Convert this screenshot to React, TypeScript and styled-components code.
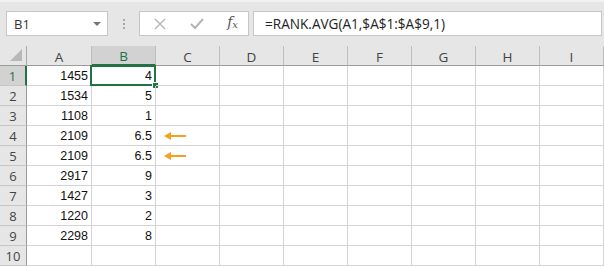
import React from 'react'
import styled, { createGlobalStyle } from 'styled-components'

const GREEN = '#217346'

const GlobalStyle = createGlobalStyle`
    html, body {
        margin: 0;
        padding: 0;
        background: #ffffff;
    }
    body {
        font-family: "Liberation Sans", Arial, sans-serif;
        overflow: hidden;
    }
`

const columns = ['A', 'B', 'C', 'D', 'E', 'F', 'G', 'H', 'I']

const data: Array<[string, string, boolean]> = [
    ['1455', '4', false],
    ['1534', '5', false],
    ['1108', '1', false],
    ['2109', '6.5', true],
    ['2109', '6.5', true],
    ['2917', '9', false],
    ['1427', '3', false],
    ['1220', '2', false],
    ['2298', '8', false],
    ['', '', false],
]

const Arrow: React.FC = () => (
    <svg width="22" height="10" viewBox="0 0 22 10">
        <line x1="3" y1="5" x2="22" y2="5" stroke="#f7a01b" strokeWidth="2" />
        <polygon points="0,5 7,1 7,9" fill="#f7a01b" />
    </svg>
)

const App: React.FC = () => {
    return (
        <Page>
            <GlobalStyle />
            <Toolbar>
                <NameBox>
                    <span>B1</span>
                    <Caret />
                </NameBox>
                <Grip>
                    <i />
                    <i />
                    <i />
                </Grip>
                <IconBox>
                    <svg width="12" height="12" viewBox="0 0 12 12">
                        <path d="M1 1 L11 11 M11 1 L1 11" stroke="#b4b4b4" strokeWidth="1.4" />
                    </svg>
                    <svg width="14" height="12" viewBox="0 0 14 12">
                        <path d="M1 6 L5 10 L13 1" stroke="#b4b4b4" strokeWidth="2" fill="none" />
                    </svg>
                    <Fx>
                        f<sub>x</sub>
                    </Fx>
                </IconBox>
                <FormulaBox>=RANK.AVG(A1,$A$1:$A$9,1)</FormulaBox>
            </Toolbar>

            <Sheet>
                <Corner>
                    <Triangle />
                </Corner>
                {columns.map(col => (
                    <ColHeader key={col} active={col === 'B'}>
                        {col}
                    </ColHeader>
                ))}

                {data.map(([a, b, mark], i) => (
                    <React.Fragment key={i}>
                        <RowHeader active={i === 0}>{i + 1}</RowHeader>
                        <Cell>{a}</Cell>
                        <Cell>
                            {b}
                            {i === 0 && (
                                <Selection>
                                    <Handle />
                                </Selection>
                            )}
                        </Cell>
                        <Cell align="left">{mark && <Arrow />}</Cell>
                        {columns.slice(3).map(col => (
                            <Cell key={col} />
                        ))}
                    </React.Fragment>
                ))}
            </Sheet>
        </Page>
    )
}

const Page = styled.div`
    width: 604px;
    height: 267px;
    overflow: hidden;
    background: #ffffff;
`

const Toolbar = styled.div`
    height: 46px;
    box-sizing: border-box;
    background: #e6e6e6;
    border-top: 2px solid #f1f1f1;
    display: flex;
    align-items: flex-start;
    padding: 9px 2px 0 6px;
`

const Box = styled.div`
    height: 25px;
    box-sizing: border-box;
    background: #ffffff;
    border: 1px solid #c6c6c6;
    display: flex;
    align-items: center;
`

const NameBox = styled(Box)`
    width: 102px;
    padding: 0 6px 0 7px;
    justify-content: space-between;
    font-family: "Open Sans", "Liberation Sans", sans-serif;
    font-size: 13px;
    color: #333;
`

const Caret = styled.div`
    width: 0;
    height: 0;
    border-left: 4px solid transparent;
    border-right: 4px solid transparent;
    border-top: 4px solid #777;
`

const Grip = styled.div`
    width: 31px;
    height: 25px;
    display: flex;
    flex-direction: column;
    align-items: center;
    justify-content: center;
    gap: 2px;

    i {
        display: block;
        width: 2px;
        height: 2px;
        background: #a8a8a8;
    }
`

const IconBox = styled(Box)`
    width: 110px;
    padding: 0 10px 0 14px;
    justify-content: space-between;
`

const Fx = styled.span`
    font-family: "DejaVu Serif", "Liberation Serif", serif;
    font-style: italic;
    font-size: 14px;
    color: #555;
    margin-top: -3px;

    sub {
        font-size: 10px;
        vertical-align: -1px;
    }
`

const FormulaBox = styled(Box)`
    flex: 1;
    margin-left: 4px;
    padding-left: 11px;
    font-family: "Open Sans", "Liberation Sans", sans-serif;
    font-size: 13.6px;
    color: #222;
`

const Sheet = styled.div`
    display: grid;
    grid-template-columns: 27px 65px repeat(8, 64px);
    grid-template-rows: 20px;
    grid-auto-rows: 20px;
`

const Corner = styled.div`
    background: #e6e6e6;
    box-sizing: border-box;
    border-right: 1px solid #ababab;
    border-bottom: 1px solid #9b9b9b;
    position: relative;
`

const Triangle = styled.div`
    position: absolute;
    right: 4px;
    bottom: 4px;
    width: 0;
    height: 0;
    border-left: 12px solid transparent;
    border-bottom: 12px solid #b8b8b8;
`

const ColHeader = styled.div<{ active?: boolean }>`
    box-sizing: border-box;
    background: ${p => (p.active ? '#d2d2d2' : '#e6e6e6')};
    color: ${p => (p.active ? GREEN : '#444')};
    border-right: 1px solid #bdbdbd;
    border-bottom: ${p => (p.active ? `2px solid ${GREEN}` : '1px solid #9b9b9b')};
    display: flex;
    align-items: center;
    justify-content: center;
    padding-top: 2px;
    font-family: "Open Sans", "Liberation Sans", sans-serif;
    font-size: 13.5px;
`

const RowHeader = styled.div<{ active?: boolean }>`
    box-sizing: border-box;
    background: ${p => (p.active ? '#d2d2d2' : '#e6e6e6')};
    color: ${p => (p.active ? GREEN : '#444')};
    border-right: ${p => (p.active ? `2px solid ${GREEN}` : '1px solid #9b9b9b')};
    border-bottom: 1px solid #c6c6c6;
    display: flex;
    align-items: center;
    justify-content: center;
    font-family: "Open Sans", "Liberation Sans", sans-serif;
    font-size: 13px;
`

const Cell = styled.div<{ align?: 'left' | 'right' }>`
    position: relative;
    box-sizing: border-box;
    border-right: 1px solid #d4d4d4;
    border-bottom: 1px solid #d4d4d4;
    display: flex;
    align-items: center;
    justify-content: ${p => (p.align === 'left' ? 'flex-start' : 'flex-end')};
    padding: 1px 3px 0 8px;
    font-family: "Liberation Sans", Arial, sans-serif;
    font-size: 12.5px;
    color: #111;
`

const Selection = styled.div`
    position: absolute;
    left: -2px;
    top: -1px;
    right: -1px;
    bottom: -1px;
    border: 2px solid ${GREEN};
    pointer-events: none;
`

const Handle = styled.div`
    position: absolute;
    right: -5px;
    bottom: -5px;
    width: 5px;
    height: 5px;
    background: ${GREEN};
    border: 1px solid #ffffff;
`

export default App
